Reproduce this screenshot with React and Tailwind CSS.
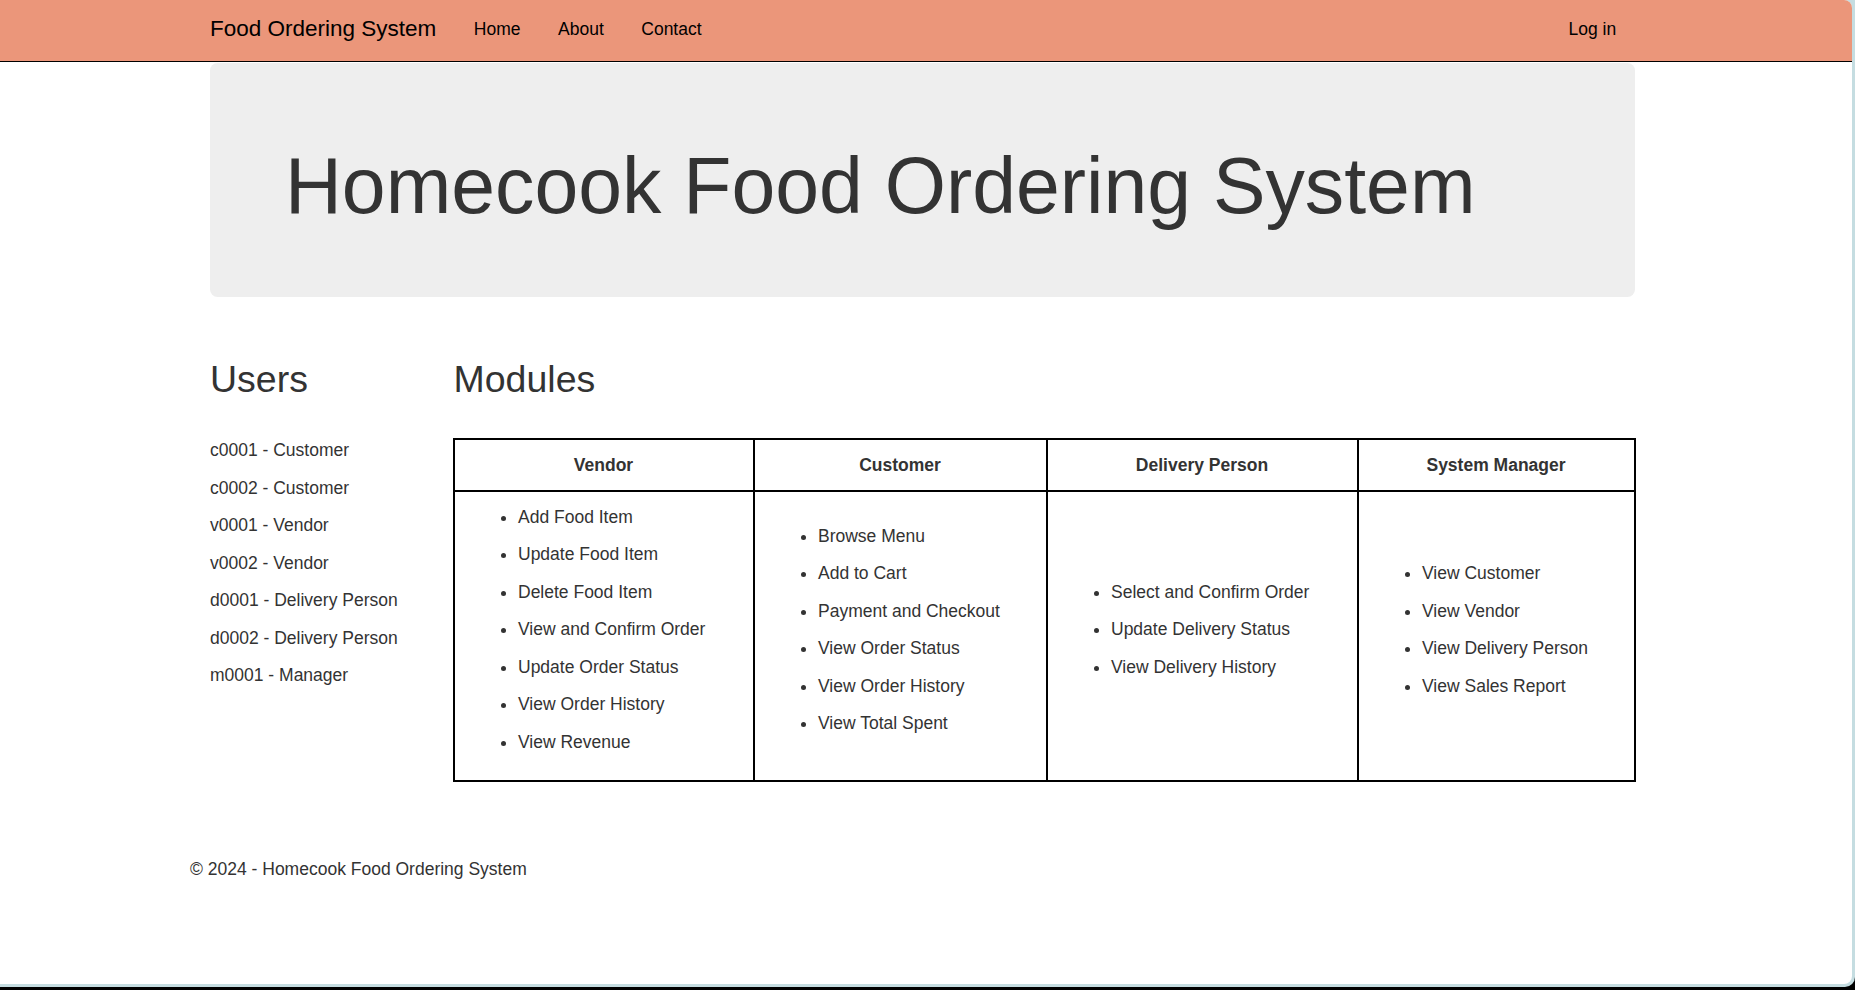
import React from "react";

const users = [
  "c0001 - Customer",
  "c0002 - Customer",
  "v0001 - Vendor",
  "v0002 - Vendor",
  "d0001 - Delivery Person",
  "d0002 - Delivery Person",
  "m0001 - Manager",
];

const columns = [
  {
    title: "Vendor",
    w: "w-[300px]",
    items: [
      "Add Food Item",
      "Update Food Item",
      "Delete Food Item",
      "View and Confirm Order",
      "Update Order Status",
      "View Order History",
      "View Revenue",
    ],
  },
  {
    title: "Customer",
    w: "w-[293px]",
    items: [
      "Browse Menu",
      "Add to Cart",
      "Payment and Checkout",
      "View Order Status",
      "View Order History",
      "View Total Spent",
    ],
  },
  {
    title: "Delivery Person",
    w: "w-[311px]",
    items: ["Select and Confirm Order", "Update Delivery Status", "View Delivery History"],
  },
  {
    title: "System Manager",
    w: "w-[277px]",
    items: ["View Customer", "View Vendor", "View Delivery Person", "View Sales Report"],
  },
];

export default function App() {
  return (
    <div className="w-[1855px] h-[990px] bg-black overflow-hidden font-['Liberation_Sans',Arial,sans-serif]">
      <div className="w-[1855px] h-[987px] bg-[#c5dde1] rounded-br-[10px] overflow-hidden">
        <div className="w-[1852px] h-[984px] bg-white rounded-tr-[8px] rounded-br-[8px] overflow-hidden text-[#333]">
          {/* Navbar */}
          <nav className="h-[62px] bg-[#eb967a] border-b border-black flex items-start pt-[17px]">
            <div className="ml-[210px] w-[1425px] flex items-start">
              <a className="text-[22.5px] leading-[25px] text-black pr-[18.75px] -mt-px">Food Ordering System</a>
              <a className="text-[17.5px] leading-[25px] text-black px-[18.75px]">Home</a>
              <a className="text-[17.5px] leading-[25px] text-black px-[18.75px]">About</a>
              <a className="text-[17.5px] leading-[25px] text-black px-[18.75px]">Contact</a>
              <a className="ml-auto text-[17.5px] leading-[25px] text-black pl-[18.75px] pr-[18.75px]">Log in</a>
            </div>
          </nav>

          {/* Jumbotron */}
          <div className="ml-[210px] mt-px w-[1425px] h-[234px] bg-[#eeeeee] rounded-[7.5px] px-[75px] pt-[80px]">
            <h1 className="text-[78.75px] leading-[86px] font-normal text-[#333]">Homecook Food Ordering System</h1>
          </div>

          {/* Row */}
          <div className="ml-[210px] mt-[62px] flex items-start">
            <div className="w-[243.5px]">
              <h2 className="text-[37.5px] leading-[41.25px] font-normal mb-[38px]">Users</h2>
              {users.map((u) => (
                <p key={u} className="text-[17.5px] leading-[25px] mb-[12.5px]">
                  {u}
                </p>
              ))}
            </div>
            <div className="w-[1182px]">
              <h2 className="text-[37.5px] leading-[41.25px] font-normal mb-[38px]">Modules</h2>
              <table className="-ml-px w-[1181px] table-fixed border-collapse border-2 border-black text-[17.5px] leading-[25px]">
                <thead>
                  <tr>
                    {columns.map((c) => (
                      <th key={c.title} className={`${c.w} border-2 border-black p-[12.5px] font-bold text-center text-[#333]`}>
                        {c.title}
                      </th>
                    ))}
                  </tr>
                </thead>
                <tbody>
                  <tr>
                    {columns.map((c) => (
                      <td key={c.title} className="border-2 border-black p-[12.5px] align-middle">
                        <ul className="list-disc pl-[51px]">
                          {c.items.map((it) => (
                            <li key={it} className="mb-[12.5px]">
                              {it}
                            </li>
                          ))}
                        </ul>
                      </td>
                    ))}
                  </tr>
                </tbody>
              </table>
            </div>
          </div>

          {/* Footer */}
          <footer className="ml-[190px] mt-[75px]">
            <p className="text-[17.5px] leading-[25px]">© 2024 - Homecook Food Ordering System</p>
          </footer>
        </div>
      </div>
    </div>
  );
}
